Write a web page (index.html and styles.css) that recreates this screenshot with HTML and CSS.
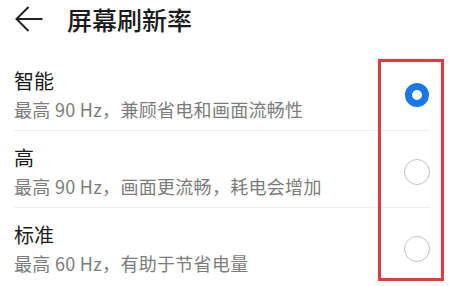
FILE: index.html
```html
<!DOCTYPE html>
<html>
<head>
    <meta charset="utf-8">
    <title>屏幕刷新率</title>
    <link rel="stylesheet" href="styles.css">
</head>
<body>
    <div class="header">
        <svg class="back" width="28" height="26" viewBox="0 0 28 26">
            <path d="M27.5 13H1.5M13.5 1L1.5 13L13.5 25" fill="none" stroke="#222" stroke-width="2"/>
        </svg>
        <div class="title">屏幕刷新率</div>
    </div>

    <div class="list">
        <div class="item">
            <div class="item-text">
                <div class="item-title">智能</div>
                <div class="item-desc">最高 90 Hz，兼顾省电和画面流畅性</div>
            </div>
            <span class="radio checked"></span>
        </div>
        <div class="item">
            <div class="item-text">
                <div class="item-title">高</div>
                <div class="item-desc">最高 90 Hz，画面更流畅，耗电会增加</div>
            </div>
            <span class="radio"></span>
        </div>
        <div class="item">
            <div class="item-text">
                <div class="item-title">标准</div>
                <div class="item-desc">最高 60 Hz，有助于节省电量</div>
            </div>
            <span class="radio"></span>
        </div>
    </div>

    <div class="highlight"></div>
</body>
</html>
```

FILE: styles.css
```css
body {
    margin: 0;
    background: #fff;
    color: #1b1b1b;
    font-family: 'Noto Sans CJK SC', 'Noto Sans', sans-serif;
    position: relative;
    height: 286px;
    overflow: hidden;
}
.header {
    display: flex;
    align-items: center;
    padding: 2px 15px 18px;
    height: 34px;
}
.back {
    display: block;
    margin-right: 24px;
}
.title {
    font-size: 25px;
    line-height: 34px;
    font-weight: 500;
}
.list {
    margin: 0 27px 0 14px;
}
.item {
    display: flex;
    align-items: center;
    justify-content: space-between;
    padding: 15px 0 9px;
    border-bottom: 1px solid #ededed;
}
.item:last-child {
    border-bottom: none;
}
.item-title {
    font-size: 20px;
    line-height: 24px;
}
.item-desc {
    margin-top: 4px;
    font-size: 18px;
    line-height: 24px;
    letter-spacing: 0.3px;
    color: #7c7c7c;
}
.radio {
    width: 26px;
    height: 26px;
    box-sizing: border-box;
    border: 1.5px solid #c2c2c2;
    border-radius: 50%;
}
.radio.checked {
    width: 24px;
    height: 24px;
    margin-right: 1px;
    border: 7.5px solid #1a78e6;
}
.highlight {
    position: absolute;
    left: 378px;
    top: 59px;
    width: 66px;
    height: 222px;
    box-sizing: border-box;
    border: 3px solid #e5393e;
}
```
